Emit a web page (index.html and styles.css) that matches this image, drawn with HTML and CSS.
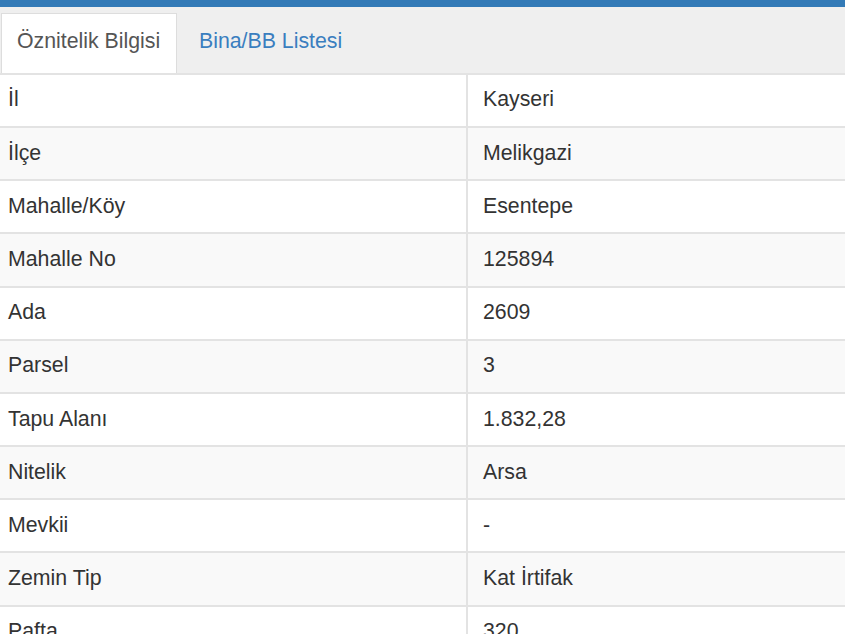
FILE: index.html
```html
<!DOCTYPE html>
<html lang="tr">
<head>
<meta charset="utf-8">
<title>Öznitelik Bilgisi</title>
<link rel="stylesheet" href="styles.css">
</head>
<body>
<div class="topbar"></div>
<div class="tabs">
  <div class="tab active">Öznitelik Bilgisi</div>
  <div class="tab link">Bina/BB Listesi</div>
</div>
<div class="table">
  <div class="row"><div class="cell key">İl</div><div class="cell val">Kayseri</div></div>
  <div class="row alt"><div class="cell key">İlçe</div><div class="cell val">Melikgazi</div></div>
  <div class="row"><div class="cell key">Mahalle/Köy</div><div class="cell val">Esentepe</div></div>
  <div class="row alt"><div class="cell key">Mahalle No</div><div class="cell val">125894</div></div>
  <div class="row"><div class="cell key">Ada</div><div class="cell val">2609</div></div>
  <div class="row alt"><div class="cell key">Parsel</div><div class="cell val">3</div></div>
  <div class="row"><div class="cell key">Tapu Alanı</div><div class="cell val">1.832,28</div></div>
  <div class="row alt"><div class="cell key">Nitelik</div><div class="cell val">Arsa</div></div>
  <div class="row"><div class="cell key">Mevkii</div><div class="cell val">-</div></div>
  <div class="row alt"><div class="cell key">Zemin Tip</div><div class="cell val">Kat İrtifak</div></div>
  <div class="row"><div class="cell key">Pafta</div><div class="cell val">320</div></div>
</div>
</body>
</html>
```
FILE: styles.css
```css
html, body {
  margin: 0;
  padding: 0;
  background: #ffffff;
  overflow: hidden;
}
body {
  font-family: "Liberation Sans", Arial, sans-serif;
  font-size: 21.3px;
  color: #333333;
}
.topbar {
  height: 7px;
  background: #337ab7;
}
.tabs {
  display: flex;
  align-items: flex-end;
  height: 65.8px;
  background: #efefef;
  padding-left: 1px;
  box-sizing: border-box;
}
.tab {
  height: 60px;
  box-sizing: border-box;
  padding: 0 15px;
  display: flex;
  align-items: center;
  padding-bottom: 3px;
  margin-right: 7px;
  white-space: nowrap;
}
.tab.active {
  background: #ffffff;
  border: 1.5px solid #dddddd;
  border-bottom: none;
  color: #555555;
  width: 176px;
}
.tab.link {
  color: #3a7ebf;
}
.table {
  display: flex;
  flex-direction: column;
}
.row {
  display: grid;
  grid-template-columns: 466px 1fr;
  height: 53.2px;
  box-sizing: border-box;
  border-top: 2px solid #e3e3e3;
  background: #ffffff;
}
.row.alt {
  background: #f9f9f9;
}
.cell {
  display: flex;
  align-items: center;
  padding-bottom: 1px;
}
.key {
  padding-left: 8px;
}
.val {
  border-left: 2px solid #e3e3e3;
  padding-left: 15px;
}
```
